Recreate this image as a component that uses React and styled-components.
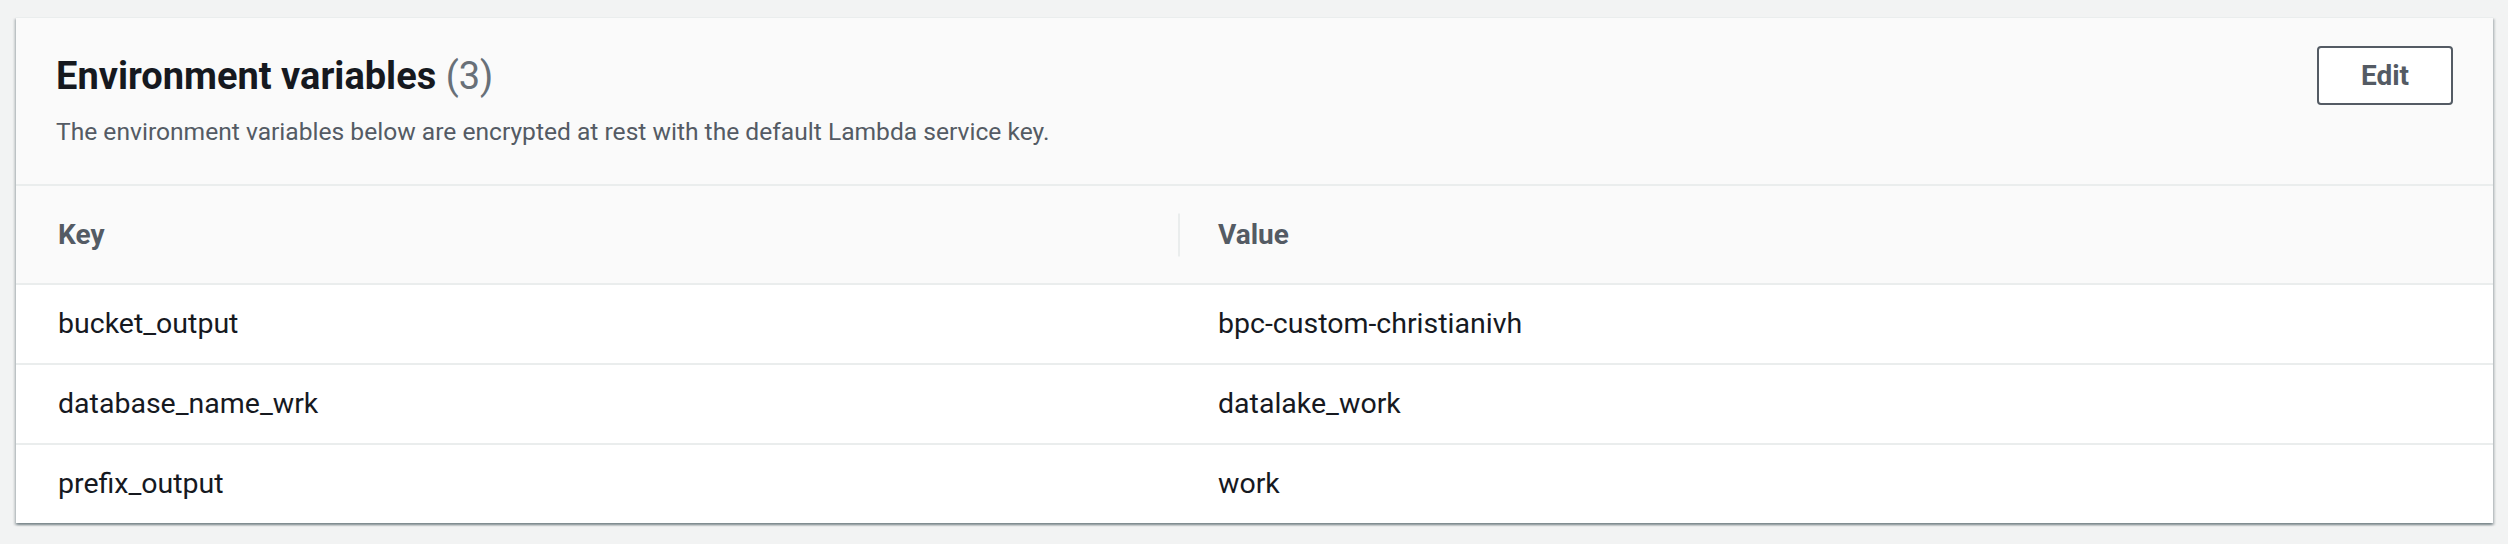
import React from "react";
import styled, { createGlobalStyle } from "styled-components";

const GlobalStyle = createGlobalStyle`
  html, body {
    margin: 0;
    padding: 0;
    background: #f2f3f3;
  }
  body {
    font-family: Roboto, "Noto Sans", "Liberation Sans", sans-serif;
    color: #16191f;
  }
`;

const Page = styled.div`
  box-sizing: border-box;
  width: 2508px;
  height: 544px;
  padding: 17px 15px 0 16px;
`;

const Card = styled.div`
  background: #ffffff;
  box-shadow: 0 2px 2px 0 rgba(0, 28, 36, 0.3), 2px 2px 2px 0 rgba(0, 28, 36, 0.15),
    -2px 2px 2px 0 rgba(0, 28, 36, 0.15);
  border-top: 1px solid #eaeded;
`;

const Header = styled.div`
  display: flex;
  justify-content: space-between;
  align-items: flex-start;
  padding: 28px 40px 32px 40px;
  background: #fafafa;
  border-bottom: 2px solid #eaeded;
`;

const TitleBlock = styled.div`
  display: flex;
  flex-direction: column;
  padding-top: 7px;
`;

const Title = styled.h2`
  margin: 0;
  font-size: 38px;
  line-height: 46px;
  font-weight: 700;
  color: #16191f;
`;

const Count = styled.span`
  font-weight: 400;
  color: #687078;
`;

const Description = styled.p`
  margin: 13px 0 0;
  font-size: 24.6px;
  line-height: 40px;
  color: #545b64;
`;

const EditButton = styled.button`
  box-sizing: border-box;
  width: 136px;
  height: 59px;
  background: #ffffff;
  border: 2px solid #545b64;
  border-radius: 4px;
  font-family: inherit;
  font-size: 28px;
  font-weight: 700;
  color: #545b64;
  cursor: pointer;
`;

const Row = styled.div`
  display: grid;
  grid-template-columns: 1162px 1fr;
  align-items: center;
  height: ${(props) => (props.head ? "97px" : "78px")};
  background: ${(props) => (props.head ? "#fafafa" : "#ffffff")};
  border-top: ${(props) => (props.first ? "none" : "2px solid #eaeded")};
`;

const Cell = styled.div`
  position: relative;
  padding: 0 40px 0 ${(props) => (props.first ? "42px" : "40px")};
  font-size: ${(props) => (props.head ? "28px" : "28.5px")};
  line-height: 40px;
  font-weight: ${(props) => (props.head ? 700 : 400)};
  color: ${(props) => (props.head ? "#545b64" : "#16191f")};
`;

const Divider = styled.span`
  position: absolute;
  left: 0;
  top: 50%;
  width: 2px;
  height: 43px;
  transform: translateY(-50%);
  background: #eaeded;
`;

const variables = [
  { key: "bucket_output", value: "bpc-custom-christianivh" },
  { key: "database_name_wrk", value: "datalake_work" },
  { key: "prefix_output", value: "work" },
];

export default function App() {
  return (
    <>
      <GlobalStyle />
      <Page>
        <Card>
          <Header>
            <TitleBlock>
              <Title>
                Environment variables <Count>({variables.length})</Count>
              </Title>
              <Description>
                The environment variables below are encrypted at rest with the
                default Lambda service key.
              </Description>
            </TitleBlock>
            <EditButton>Edit</EditButton>
          </Header>
          <Row head first>
            <Cell head first>
              Key
            </Cell>
            <Cell head>
              <Divider />
              Value
            </Cell>
          </Row>
          {variables.map((v) => (
            <Row key={v.key}>
              <Cell first>{v.key}</Cell>
              <Cell>{v.value}</Cell>
            </Row>
          ))}
        </Card>
      </Page>
    </>
  );
}
